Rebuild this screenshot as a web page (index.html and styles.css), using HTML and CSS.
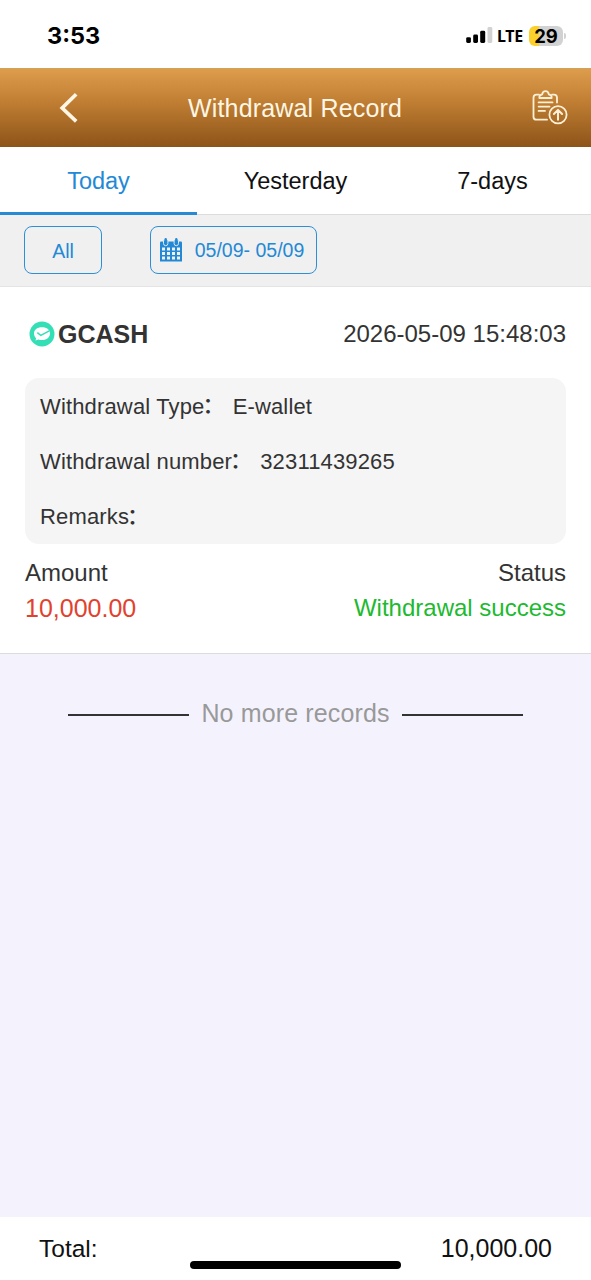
FILE: index.html
```
<!DOCTYPE html>
<html lang="en">
<head>
<meta charset="utf-8">
<title>Withdrawal Record</title>
<link rel="stylesheet" href="styles.css">
</head>
<body>
<div class="screen">
  <div class="status-bar">
    <span class="clock">3:53</span>
    <div class="indicators">
      <svg class="signal" width="27" height="17" viewBox="0 0 27 17">
        <rect x="0.2" y="10.2" width="4.7" height="5.8" rx="1.4" fill="#000"/>
        <rect x="7.2" y="7.6" width="4.8" height="8.4" rx="1.4" fill="#000"/>
        <rect x="14.2" y="3.8" width="5" height="12.2" rx="1.4" fill="#000"/>
        <rect x="21.5" y="0" width="4.8" height="16" rx="1.4" fill="#d2d2d2"/>
      </svg>
      <span class="network">LTE</span>
      <span class="battery">29</span><span class="battery-tip"></span>
    </div>
  </div>

  <header class="header">
    <svg class="back" width="20" height="32" viewBox="0 0 20 32"><path d="M17.2 2.3 3.2 16 17.2 29.3" fill="none" stroke="#fff6e4" stroke-width="3.7"/></svg>
    <h1 class="title">Withdrawal Record</h1>
    <svg class="export" width="36" height="36" viewBox="0 0 36 36" fill="none" stroke="#fdf0d6" stroke-width="1.8" stroke-linecap="round" stroke-linejoin="round">
      <path d="M7 4.7H4.5Q1.5 4.7 1.5 7.7V26.700Q1.500 29.700 4.500 29.700H15"/>
      <path d="M20 4.700H22Q25 4.700 25 7.700V12.500"/>
      <path d="M7.400 8V6.800Q7.400 5.200 10.200 4.300Q10.700 1.200 13.500 1.200T16.800 4.300Q19.600 5.200 19.600 6.800V8Z"/>
      <path d="M6.600 12.400H20.500M6.600 16.600H17.500M6.600 20.900H13"/>
      <circle cx="26" cy="24.700" r="8.600"/>
      <path d="M26 29.700V20M21.900 24 26 19.900 30.100 24" stroke-width="2"/>
    </svg>
  </header>

  <nav class="tabs">
    <a class="tab tab-active">Today</a>
    <a class="tab">Yesterday</a>
    <a class="tab">7-days</a>
  </nav>

  <div class="filters">
    <button class="chip chip-type">All</button>
    <button class="chip chip-date">
      <svg class="calendar" width="22" height="24" viewBox="0 0 22 24">
        <path d="M0 4.500Q0 3.500 1 3.500H21Q22 3.500 22 4.500V23.500H0Z" fill="#2389d6"/>
        <path d="M3.500 2.500V5.500a2.200 2.200 0 0 0 4.400 0V2.500M14.100 2.500V5.500a2.200 2.200 0 0 0 4.400 0V2.500" fill="#2389d6" stroke="#f0f0f0" stroke-width=".9"/>
        <rect x="4.500" y="0" width="2.400" height="6.500" rx="1.200" fill="#2389d6"/>
        <rect x="15.100" y="0" width="2.400" height="6.500" rx="1.200" fill="#2389d6"/>
        <path d="M2 11H20M2 15.500H20M2 20H20" stroke="#f0f0f0" stroke-width="2.900" stroke-dasharray="3 2"/>
      </svg>
      <span>05/09- 05/09</span>
    </button>
  </div>

  <section class="record">
    <div class="record-head">
      <div class="wallet">
        <svg width="26" height="26" viewBox="0 0 26 26">
          <circle cx="13" cy="13" r="12.500" fill="#35dfb5"/>
          <path d="M13 6.200c5 0 8 2.600 8 6.400s-3.300 6.500-8 6.500c-1.400 0-2.500-.2-3.600-.6l-2.900 1 .6-2.300C5.700 16 5 14.500 5 12.600c0-3.800 3-6.400 8-6.400Z" fill="#fff"/>
          <path d="m8.300 11.600 3.500 2.700 8.500-4.500" fill="none" stroke="#35dfb5" stroke-width="1.500"/>
        </svg>
        <span class="wallet-name">GCASH</span>
      </div>
      <time class="time">2026-05-09 15:48:03</time>
    </div>
    <div class="details">
      <div class="detail"><span class="label">Withdrawal Type<span class="colon">：</span></span><span>E-wallet</span></div>
      <div class="detail"><span class="label">Withdrawal number<span class="colon">：</span></span><span>32311439265</span></div>
      <div class="detail"><span class="label">Remarks<span class="colon">：</span></span></div>
    </div>
    <div class="summary"><span>Amount</span><span>Status</span></div>
    <div class="summary"><span class="amount">10,000.00</span><span class="success">Withdrawal success</span></div>
  </section>

  <main class="end"><i class="rule"></i><span class="end-text">No more records</span><i class="rule"></i></main>

  <footer class="footer">
    <span class="total-label">Total:</span>
    <span>10,000.00</span>
    <i class="home-indicator"></i>
  </footer>
</div>
</body>
</html>
```
FILE: styles.css
```
* { box-sizing: border-box; }
body { margin: 0; font-family: "Liberation Sans", "Noto Sans CJK SC", sans-serif; color: #333; }
.screen { width: 591px; height: 1280px; display: flex; flex-direction: column; background: #f4f3fd; overflow: hidden; }

.status-bar { height: 68px; flex: none; display: flex; justify-content: space-between; align-items: center; padding: 3px 25px 0 47px; background: #fff; color: #000; font-family: Inter, sans-serif; }
.clock { font-size: 23.500px; font-weight: 700; line-height: 28px; }
.indicators { display: flex; align-items: center; }
.network { width: 27px; margin-left: 4px; font: 700 16px/20px "Noto Sans", sans-serif; letter-spacing: -.3px; }
.battery { width: 34px; height: 20px; margin-left: 5px; border-radius: 6px; background: linear-gradient(90deg, #fad02c 10px, #d2d2d2 10px); font-size: 18.500px; font-weight: 700; line-height: 20px; text-align: center; }
.battery-tip { width: 2px; height: 6px; margin-left: 1px; border-radius: 0 2px 2px 0; background: #d2d2d2; }

.header { height: 79px; flex: none; display: grid; grid-template-columns: 20px 1fr 36px; align-items: center; padding: 0 23px 0 59px; background: linear-gradient(#de9d4c, #bd7c31 45%, #8d5419); border-top: 1px solid #cfa15b; }
.title { margin: 0; padding-right: 21px; text-align: center; color: #fff6e4; font-size: 25px; font-weight: 400; line-height: 32px; letter-spacing: .17px; }

.tabs { height: 68px; flex: none; display: grid; grid-template-columns: repeat(3, 1fr); background: #fff; border-bottom: 1px solid #dcdcdc; }
.tab { height: 68px; display: flex; justify-content: center; align-items: center; font-size: 23.500px; color: #111; border-bottom: 3px solid transparent; padding-top: 3px; }
.tab-active { color: #2389d6; border-color: #268bd2; }

.filters { height: 72px; flex: none; display: flex; align-items: flex-start; gap: 48px; padding: 11px 24px; background: #f0f0f0; border-bottom: 1px solid #e4e4e4; }
.chip { height: 48px; display: flex; align-items: center; justify-content: center; border: 1.500px solid #2d8fd6; border-radius: 8px; background: transparent; color: #2389d6; font: 19.500px "Liberation Sans", sans-serif; padding: 0; }
.chip-type { width: 78px; padding-top: 2px; }
.chip-date { width: 167px; gap: 13px; padding-right: 3px; }

.record { height: 367px; flex: none; padding: 27px 25px 0; background: #fff; border-bottom: 1px solid #dcdcdc; }
.record-head { height: 40px; display: flex; align-items: center; justify-content: space-between; }
.wallet { display: flex; align-items: center; gap: 3px; padding-left: 4px; }
.wallet-name { font-size: 25px; font-weight: 700; }
.time { font-size: 24px; }
.details { height: 166px; margin: 24px 0 11px; padding: 1px 15px 0; border-radius: 14px; background: #f5f5f5; font-size: 22px; letter-spacing: .15px; }
.detail { height: 55.300px; display: flex; align-items: center; gap: 8px; line-height: 26px; }
.label { height: 26px; display: flex; align-items: center; }
.colon { height: 20px; margin: -1px 0 0 -2px; line-height: 20px; font-weight: 500; }
.summary { height: 35.500px; display: flex; align-items: center; justify-content: space-between; font-size: 24px; }
.amount { color: #e2422d; font-size: 25px; }
.success { color: #20b92f; }

.end { flex: 1; display: flex; justify-content: center; align-items: flex-start; gap: 12px; padding-top: 43px; color: #999; font-size: 25px; line-height: 32px; letter-spacing: .13px; }
.rule { width: 121px; height: 2px; margin-top: 17px; background: #333; }

.footer { position: relative; height: 63px; flex: none; display: flex; justify-content: space-between; align-items: center; padding: 0 39px; background: #fff; color: #111; font-size: 25px; }
.total-label { font-size: 24.500px; }
.home-indicator { position: absolute; left: 190px; bottom: 11px; width: 211px; height: 8px; border-radius: 4px; background: #000; }
```
